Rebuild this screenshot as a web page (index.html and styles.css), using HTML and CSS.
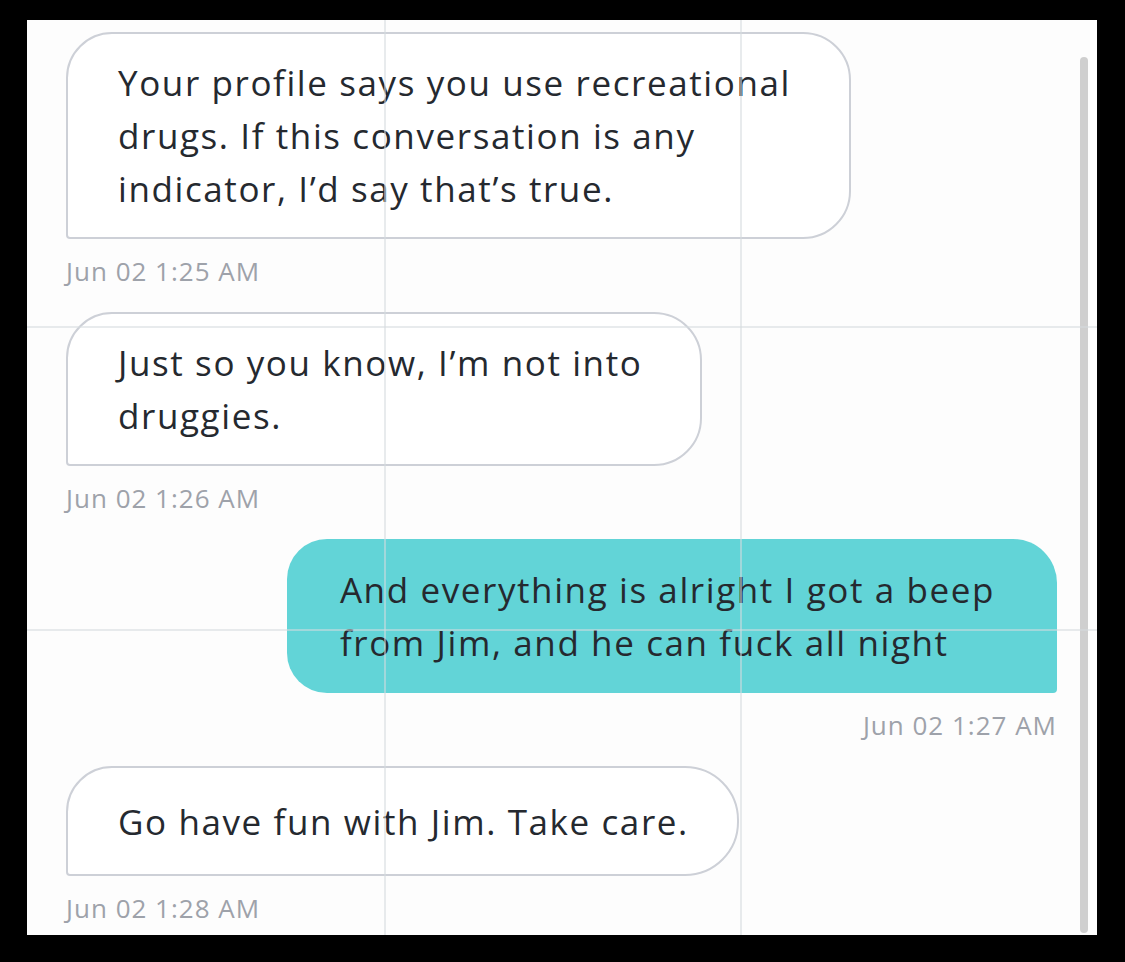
FILE: index.html
```html
<!DOCTYPE html>
<html lang="en">
<head>
    <meta charset="UTF-8">
    <meta name="viewport" content="width=device-width, initial-scale=1.0">
    <title>Messages</title>
    <link rel="stylesheet" href="styles.css">
</head>
<body>

    <div class="panel">
        <div class="thread">
            <div class="message incoming">
                <div class="bubble">Your profile says you use recreational<br>drugs. If this conversation is any<br>indicator, I&rsquo;d say that&rsquo;s true.</div>
                <div class="time">Jun 02 1:25 AM</div>
            </div>

            <div class="message incoming">
                <div class="bubble">Just so you know, I&rsquo;m not into<br>druggies.</div>
                <div class="time">Jun 02 1:26 AM</div>
            </div>

            <div class="message outgoing">
                <div class="bubble">And everything is alright I got a beep<br>from Jim, and he can fuck all night</div>
                <div class="time">Jun 02 1:27 AM</div>
            </div>

            <div class="message incoming">
                <div class="bubble single">Go have fun with Jim. Take care.</div>
                <div class="time">Jun 02 1:28 AM</div>
            </div>
        </div>

        <div class="scrollbar"></div>

        <!-- crop grid left over from the photo editor -->
        <span class="grid-line vertical first"></span>
        <span class="grid-line vertical second"></span>
        <span class="grid-line horizontal first"></span>
        <span class="grid-line horizontal second"></span>
    </div>

</body>
</html>
```

FILE: styles.css
```css
body {
    margin: 0;
    background-color: #000;
    font-family: "Open Sans", "Noto Sans", sans-serif;
}
.panel {
    position: relative;
    display: flex;
    width: 1070px;
    height: 915px;
    margin: 20px 0 0 27px;
    background-color: #fdfdfd;
    overflow: hidden;
}
.thread {
    flex: 1;
    display: flex;
    flex-direction: column;
    padding: 12px 23px 0 39px;
}
.message {
    display: flex;
    flex-direction: column;
    margin-bottom: 25px;
}
.message.incoming {
    align-items: flex-start;
}
.message.outgoing {
    align-items: flex-end;
}
.bubble {
    padding: 22px 58px 22px 50px;
    font-size: 35px;
    line-height: 53px;
    color: #25292f;
    letter-spacing: 1.6px;
    white-space: nowrap;
}
.incoming .bubble {
    border: 2px solid #cdd0d7;
    border-radius: 46px 48px 48px 4px;
    background-color: #fff;
}
.incoming .bubble.single {
    padding: 27px 48px 26px 50px;
    border-radius: 46px 54px 54px 4px;
}
.outgoing .bubble {
    padding: 24px 62px 24px 53px;
    background-color: #62d4d7;
    border-radius: 40px 44px 4px 40px;
}
.time {
    margin-top: 16px;
    font-size: 26px;
    line-height: 32px;
    color: #9ea2aa;
    letter-spacing: 1px;
}
.scrollbar {
    width: 8px;
    margin: 37px 9px 2px 0;
    border-radius: 4px;
    background-color: #cfcfcf;
}
.grid-line {
    position: absolute;
    background-color: rgba(214, 218, 222, 0.55);
}
.grid-line.vertical {
    top: 0;
    bottom: 0;
    width: 2px;
}
.grid-line.horizontal {
    left: 0;
    right: 0;
    height: 2px;
}
.grid-line.vertical.first {
    left: 357px;
}
.grid-line.vertical.second {
    left: 713px;
}
.grid-line.horizontal.first {
    top: 306px;
}
.grid-line.horizontal.second {
    top: 609px;
}
```
